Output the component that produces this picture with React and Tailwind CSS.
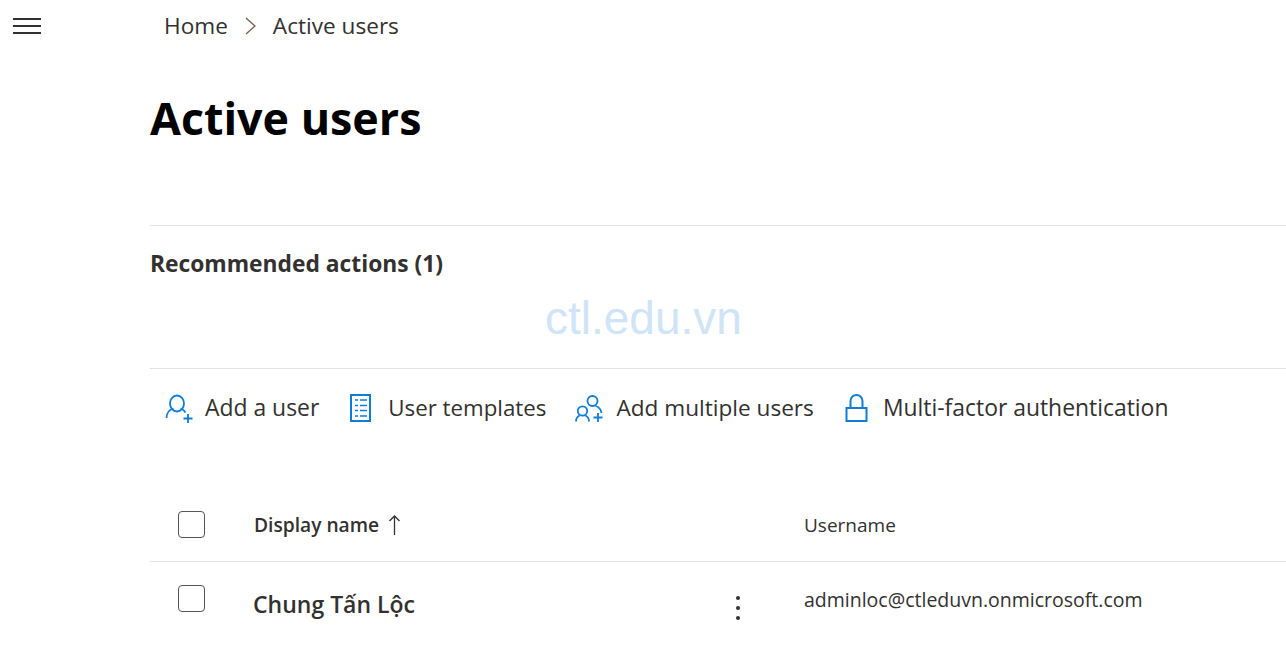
const font = { fontFamily: '"Open Sans", "Noto Sans", sans-serif' };

function AddUser() {
  return (
    <svg width="28" height="29" viewBox="0 0 28 29" fill="none" stroke="#0f7cd8" strokeWidth="1.8">
      <ellipse cx="12" cy="9.500" rx="7" ry="8" />
      <path d="M1.500 24c0-5.500 3.500-8.500 7-9.500M15.500 14.500c2.500.8 4 2 5 4" />
      <path d="M23 20v9M18.500 24.500h9" />
    </svg>
  );
}
function Templates() {
  return (
    <svg width="22" height="29" viewBox="0 0 22 29" fill="none" stroke="#0f7cd8">
      <rect x="1" y="1" width="19" height="26" strokeWidth="2" />
      <path d="M5 6h3M10 6h7M5 11.500h3M10 11.500h7M5 16.500h3M10 16.500h7M5 22h3M10 22h7" strokeWidth="1.500" />
    </svg>
  );
}
function AddUsers() {
  return (
    <svg width="29" height="27" viewBox="0 0 29 27" fill="none" stroke="#0f7cd8" strokeWidth="1.8">
      <circle cx="17.500" cy="6" r="5" />
      <circle cx="7.500" cy="16" r="4.700" />
      <path d="M1 26.500c0-3 1.500-5 3.500-6M10.500 20.500c2 1 3.500 3 3.500 6" />
      <path d="M20.500 11c3 .8 5.500 3.500 6 7" />
      <path d="M23 18v9M18.500 22.500h9" />
    </svg>
  );
}
function Lock() {
  return (
    <svg width="23" height="29" viewBox="0 0 23 29" fill="none" stroke="#0f7cd8" strokeWidth="2">
      <rect x="1.500" y="14" width="20" height="13" />
      <path d="M5.500 14V7a6 6 0 0 1 12 0v7" />
    </svg>
  );
}

function Command({ icon, label, iconBox, className, textSize }) {
  return (
    <div className={`flex items-center ${className}`}>
      <span className={`flex items-center ${iconBox}`}>{icon}</span>
      <span className={`leading-none text-[#323130] ${textSize}`}>{label}</span>
    </div>
  );
}

export default function App() {
  return (
    <div style={font} className="relative flex w-[1286px] h-[647px] overflow-hidden bg-white">
      <div className="w-[150px] shrink-0 pt-[18px] pl-[13px]">
        <div className="flex flex-col gap-[5px] w-[28px]">
          <div className="h-[2px] bg-[#323130]" />
          <div className="h-[2px] bg-[#323130]" />
          <div className="h-[2px] bg-[#323130]" />
        </div>
      </div>
      <div className="flex-1 min-w-0">
        <div className="flex items-center h-[52px] pl-[14px] text-[22.6px] text-[#323130]">
          <span>Home</span>
          <svg className="mx-[16px]" width="13" height="20" viewBox="0 0 13 20" fill="none" stroke="#7a5c4c" strokeWidth="1.300">
            <path d="M2 2l9 8-9 8" />
          </svg>
          <span>Active users</span>
        </div>
        <h1 className="mt-[34px] h-[140px] text-[44.800px] leading-[64px] font-bold text-black border-b border-[#e5e5e5]">Active users</h1>
        <div className="h-[143px] pt-[24px] text-[22.800px] leading-[28px] font-bold text-[#323130] border-b border-[#e1e1e1]">Recommended actions (1)</div>
        <div className="flex items-center h-[78px] pl-[15px]">
          <Command icon={<AddUser />} label="Add a user" iconBox="w-[40px]" textSize="text-[22.900px]" />
          <Command icon={<Templates />} label="User templates" iconBox="w-[38px]" textSize="text-[22.300px]" className="ml-[31px]" />
          <Command icon={<AddUsers />} label="Add multiple users" iconBox="w-[41px]" textSize="text-[22.600px]" className="ml-[29px]" />
          <Command icon={<Lock />} label="Multi-factor authentication" iconBox="w-[38px]" textSize="text-[22.900px]" className="ml-[31px]" />
        </div>
        <div className="mt-[36px] flex items-start h-[79px] border-b border-[#e5e5e5]">
          <div className="ml-[28px] w-[76px] pt-[28px]"><div className="w-[27px] h-[27px] rounded-[4px] border border-[#555]" /></div>
          <div className="w-[550px] pt-[28px] flex items-center text-[19.200px] leading-[28px] font-semibold text-[#323130]">
            Display name
            <svg className="ml-[9px]" width="13" height="22" viewBox="0 0 13 22" fill="none" stroke="#323130" strokeWidth="1.300"><path d="M6.500 21V2M1.500 7l5-5 5 5" /></svg>
          </div>
          <div className="pt-[28px] text-[19px] leading-[28px] text-[#323130]">Username</div>
        </div>
        <div className="flex items-start h-[85px]">
          <div className="ml-[28px] w-[75px] pt-[23px]"><div className="w-[27px] h-[27px] rounded-[4px] border border-[#555]" /></div>
          <div className="w-[471px] pt-[25px] text-[23px] leading-[34px] font-semibold text-[#323130]">Chung Tấn Lộc</div>
          <div className="w-[80px] pl-[12px] pt-[34px] flex flex-col gap-[6px]">
            <div className="w-[4px] h-[4px] rounded-full bg-[#323130]" />
            <div className="w-[4px] h-[4px] rounded-full bg-[#323130]" />
            <div className="w-[4px] h-[4px] rounded-full bg-[#323130]" />
          </div>
          <div className="pt-[24px] text-[19.500px] leading-[28px] text-[#323130]">adminloc@ctleduvn.onmicrosoft.com</div>
        </div>
      </div>
      <div className="absolute left-[545px] top-[293px] text-[46px] leading-[50px] text-[#cfe4f6]" style={{ fontFamily: '"Liberation Sans", sans-serif' }}>ctl.edu.vn</div>
    </div>
  );
}
